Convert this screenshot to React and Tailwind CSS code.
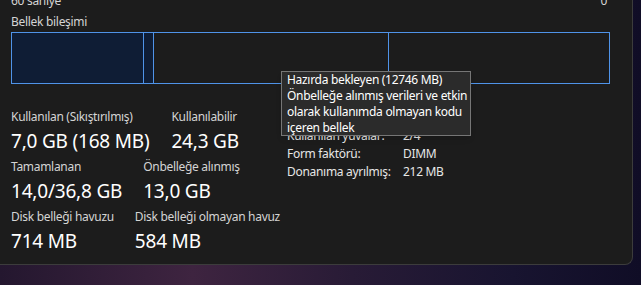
import React from "react";

const Metric = ({ label, value }) => (
  <div className="flex flex-col whitespace-nowrap">
    <span className="text-[12px] leading-4 tracking-[-0.3px] text-[#d4d4d4]">{label}</span>
    <span className="mt-[3px] text-[19px] leading-[26px] tracking-[-0.2px] text-white">{value}</span>
  </div>
);

const InfoRow = ({ label, value }) => (
  <div className="flex h-[18px] items-center whitespace-nowrap text-[12px] tracking-[-0.3px] text-[#e6e6e6]">
    <span className="w-[116px]">{label}</span>
    <span>{value}</span>
  </div>
);

export default function App() {
  return (
    <div
      className="relative h-[285px] w-[641px] overflow-hidden bg-[linear-gradient(90deg,#24172f_0%,#3e2440_30%,#281b36_55%,#181430_80%,#100d26_100%)]"
      style={{ fontFamily: '"Noto Sans", "Open Sans", sans-serif' }}
    >
      {/* Task manager window */}
      <div className="h-[272px] w-[633px] rounded-br-lg border-r border-b border-[#3c3c3c] bg-[#1c1c1c]">
        <div className="px-[11px]">
          <div className="-mt-[7px] flex justify-between pr-[14px] text-[12px] leading-4 tracking-[-0.3px] text-[#d4d4d4]">
            <span>60 saniye</span>
            <span>0</span>
          </div>
          <div className="mt-[5px] text-[12px] leading-4 tracking-[-0.3px] text-[#d4d4d4]">Bellek bileşimi</div>

          {/* composition bar */}
          <div className="mt-[2px] flex h-[52px] w-[599px] border border-[#4f93e8]">
            <div className="w-[132px] border-r border-[#4f93e8] bg-[#0f1d35]" />
            <div className="w-[10px] border-r border-[#4f93e8] bg-[#0f1d35]" />
            <div className="w-[235px] border-r border-[#4f93e8]" />
            <div className="flex-1" />
          </div>

          <div className="mt-[25px] flex">
            <div className="flex w-[276px] flex-col gap-[5px]">
              <div className="flex gap-[22px]">
                <Metric label="Kullanılan (Sıkıştırılmış)" value="7,0 GB (168 MB)" />
                <Metric label="Kullanılabilir" value="24,3 GB" />
              </div>
              <div className="flex gap-[21px]">
                <Metric label="Tamamlanan" value="14,0/36,8 GB" />
                <Metric label="Önbelleğe alınmış" value="13,0 GB" />
              </div>
              <div className="flex gap-[21px]">
                <Metric label="Disk belleği havuzu" value="714 MB" />
                <Metric label="Disk belleği olmayan havuz" value="584 MB" />
              </div>
            </div>
            <div className="flex flex-col">
              <InfoRow label="Hız:" value="3200 MHz" />
              <InfoRow label="Kullanılan yuvalar:" value="2/4" />
              <InfoRow label="Form faktörü:" value="DIMM" />
              <InfoRow label="Donanıma ayrılmış:" value="212 MB" />
            </div>
          </div>
        </div>
      </div>

      {/* tooltip */}
      <div className="absolute left-[281px] top-[71px] h-[65px] w-[190px] whitespace-nowrap border border-[#767676] bg-[#2b2b2b] px-[5px] py-[0px] text-[12px] leading-4 tracking-[-0.3px] text-white shadow-md">
        Hazırda bekleyen (12746 MB)
        <br />
        Önbelleğe alınmış verileri ve etkin
        <br />
        olarak kullanımda olmayan kodu
        <br />
        içeren bellek
      </div>
    </div>
  );
}
